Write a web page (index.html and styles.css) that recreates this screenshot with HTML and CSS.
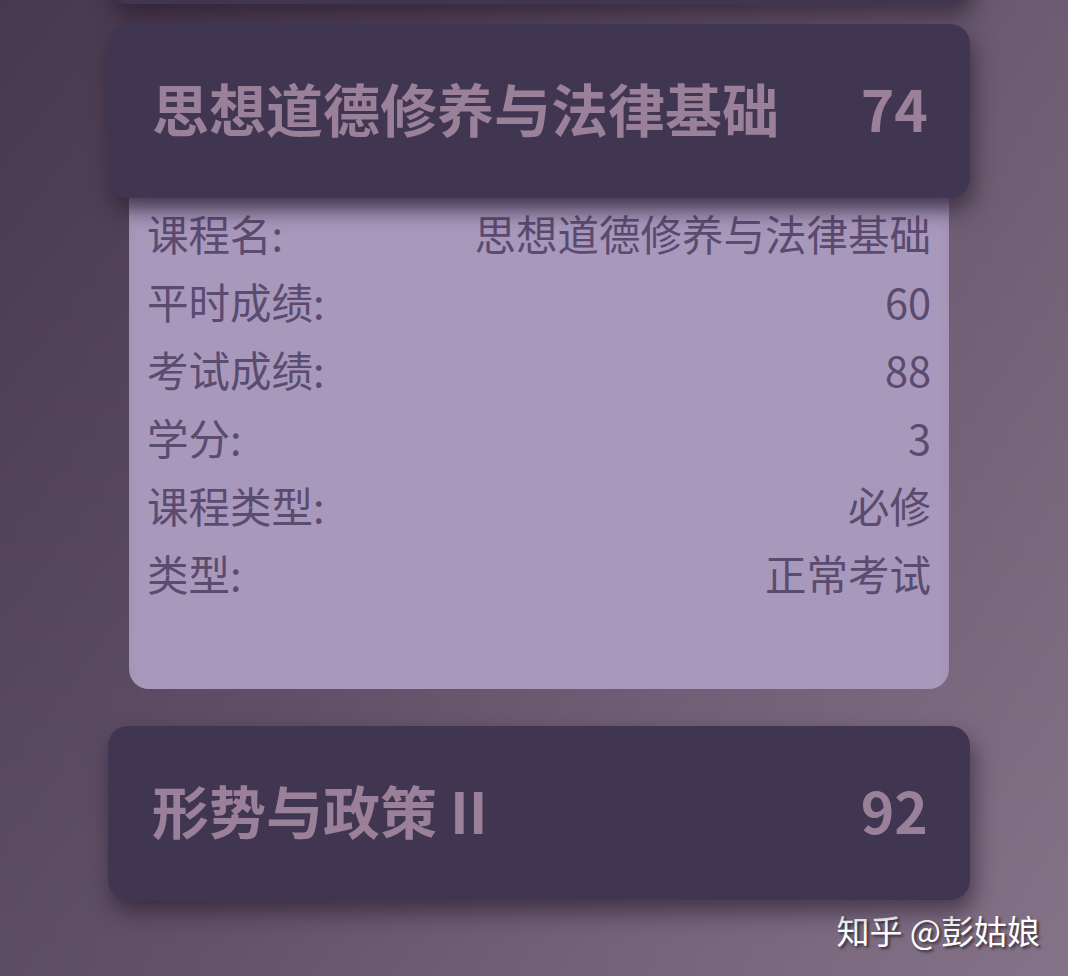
FILE: index.html
```html
<!DOCTYPE html>
<html lang="zh-CN">

<head>
    <meta charset="UTF-8">
    <meta name="viewport" content="width=device-width, initial-scale=1.0">
    <link rel="stylesheet" href="styles.css">
</head>

<body>
    <div class="list">
        <!-- previous course, scrolled mostly out of view -->
        <div class="course">
            <div class="course-head"></div>
        </div>

        <div class="course open">
            <div class="course-head">
                <span class="course-name">思想道德修养与法律基础</span>
                <span class="course-score">74</span>
            </div>
            <div class="course-detail">
                <div class="row"><span>课程名:</span><span>思想道德修养与法律基础</span></div>
                <div class="row"><span>平时成绩:</span><span>60</span></div>
                <div class="row"><span>考试成绩:</span><span>88</span></div>
                <div class="row"><span>学分:</span><span>3</span></div>
                <div class="row"><span>课程类型:</span><span>必修</span></div>
                <div class="row"><span>类型:</span><span>正常考试</span></div>
            </div>
        </div>

        <div class="course">
            <div class="course-head">
                <span class="course-name">形势与政策 II</span>
                <span class="course-score">92</span>
            </div>
        </div>
    </div>

    <div class="watermark">知乎 @彭姑娘</div>
</body>

</html>
```

FILE: styles.css
```css
html,
body {
    height: 100%;
}

body {
    margin: 0;
    padding: 0;
    overflow: hidden;
    font-family: "Noto Sans CJK SC", "Noto Sans", sans-serif;
    background:
        linear-gradient(180deg, rgba(0, 0, 0, 0.06) 0%, rgba(255, 255, 255, 0.05) 100%),
        linear-gradient(105deg, #4c3c54 0%, #5b4962 35%, #6c5a72 65%, #7e6b82 100%);
    position: relative;
}

.list {
    display: flex;
    flex-direction: column;
    gap: 20px;
    margin-top: -170px;
    padding: 0 98px 0 108px;
}

.course {
    display: flex;
    flex-direction: column;
}

.course.open {
    margin-bottom: 17px;
}

.course-head {
    position: relative;
    z-index: 2;
    height: 174px;
    box-sizing: border-box;
    display: flex;
    align-items: center;
    justify-content: space-between;
    padding: 0 42px 8px 44px;
    background-color: #413651;
    border-radius: 20px;
    box-shadow: 4px 12px 22px rgba(30, 18, 34, 0.55);
    color: #9a8099;
    font-size: 57px;
    font-weight: 700;
}

.course-score {
    font-weight: 600;
}

.course-detail {
    position: relative;
    z-index: 1;
    margin: 0 21px;
    padding: 1px 18px 82px;
    background-color: #a898bc;
    border-radius: 0 0 20px 20px;
    box-shadow: inset 0 18px 18px -12px rgba(40, 28, 56, 0.45);
    color: #5a4b6f;
    font-size: 41.5px;
}

.row {
    display: flex;
    justify-content: space-between;
    line-height: 68px;
}

.watermark {
    position: absolute;
    right: 28px;
    bottom: 22px;
    color: #ffffff;
    font-size: 33px;
    text-shadow: 2px 2px 3px rgba(0, 0, 0, 0.6);
}
```
